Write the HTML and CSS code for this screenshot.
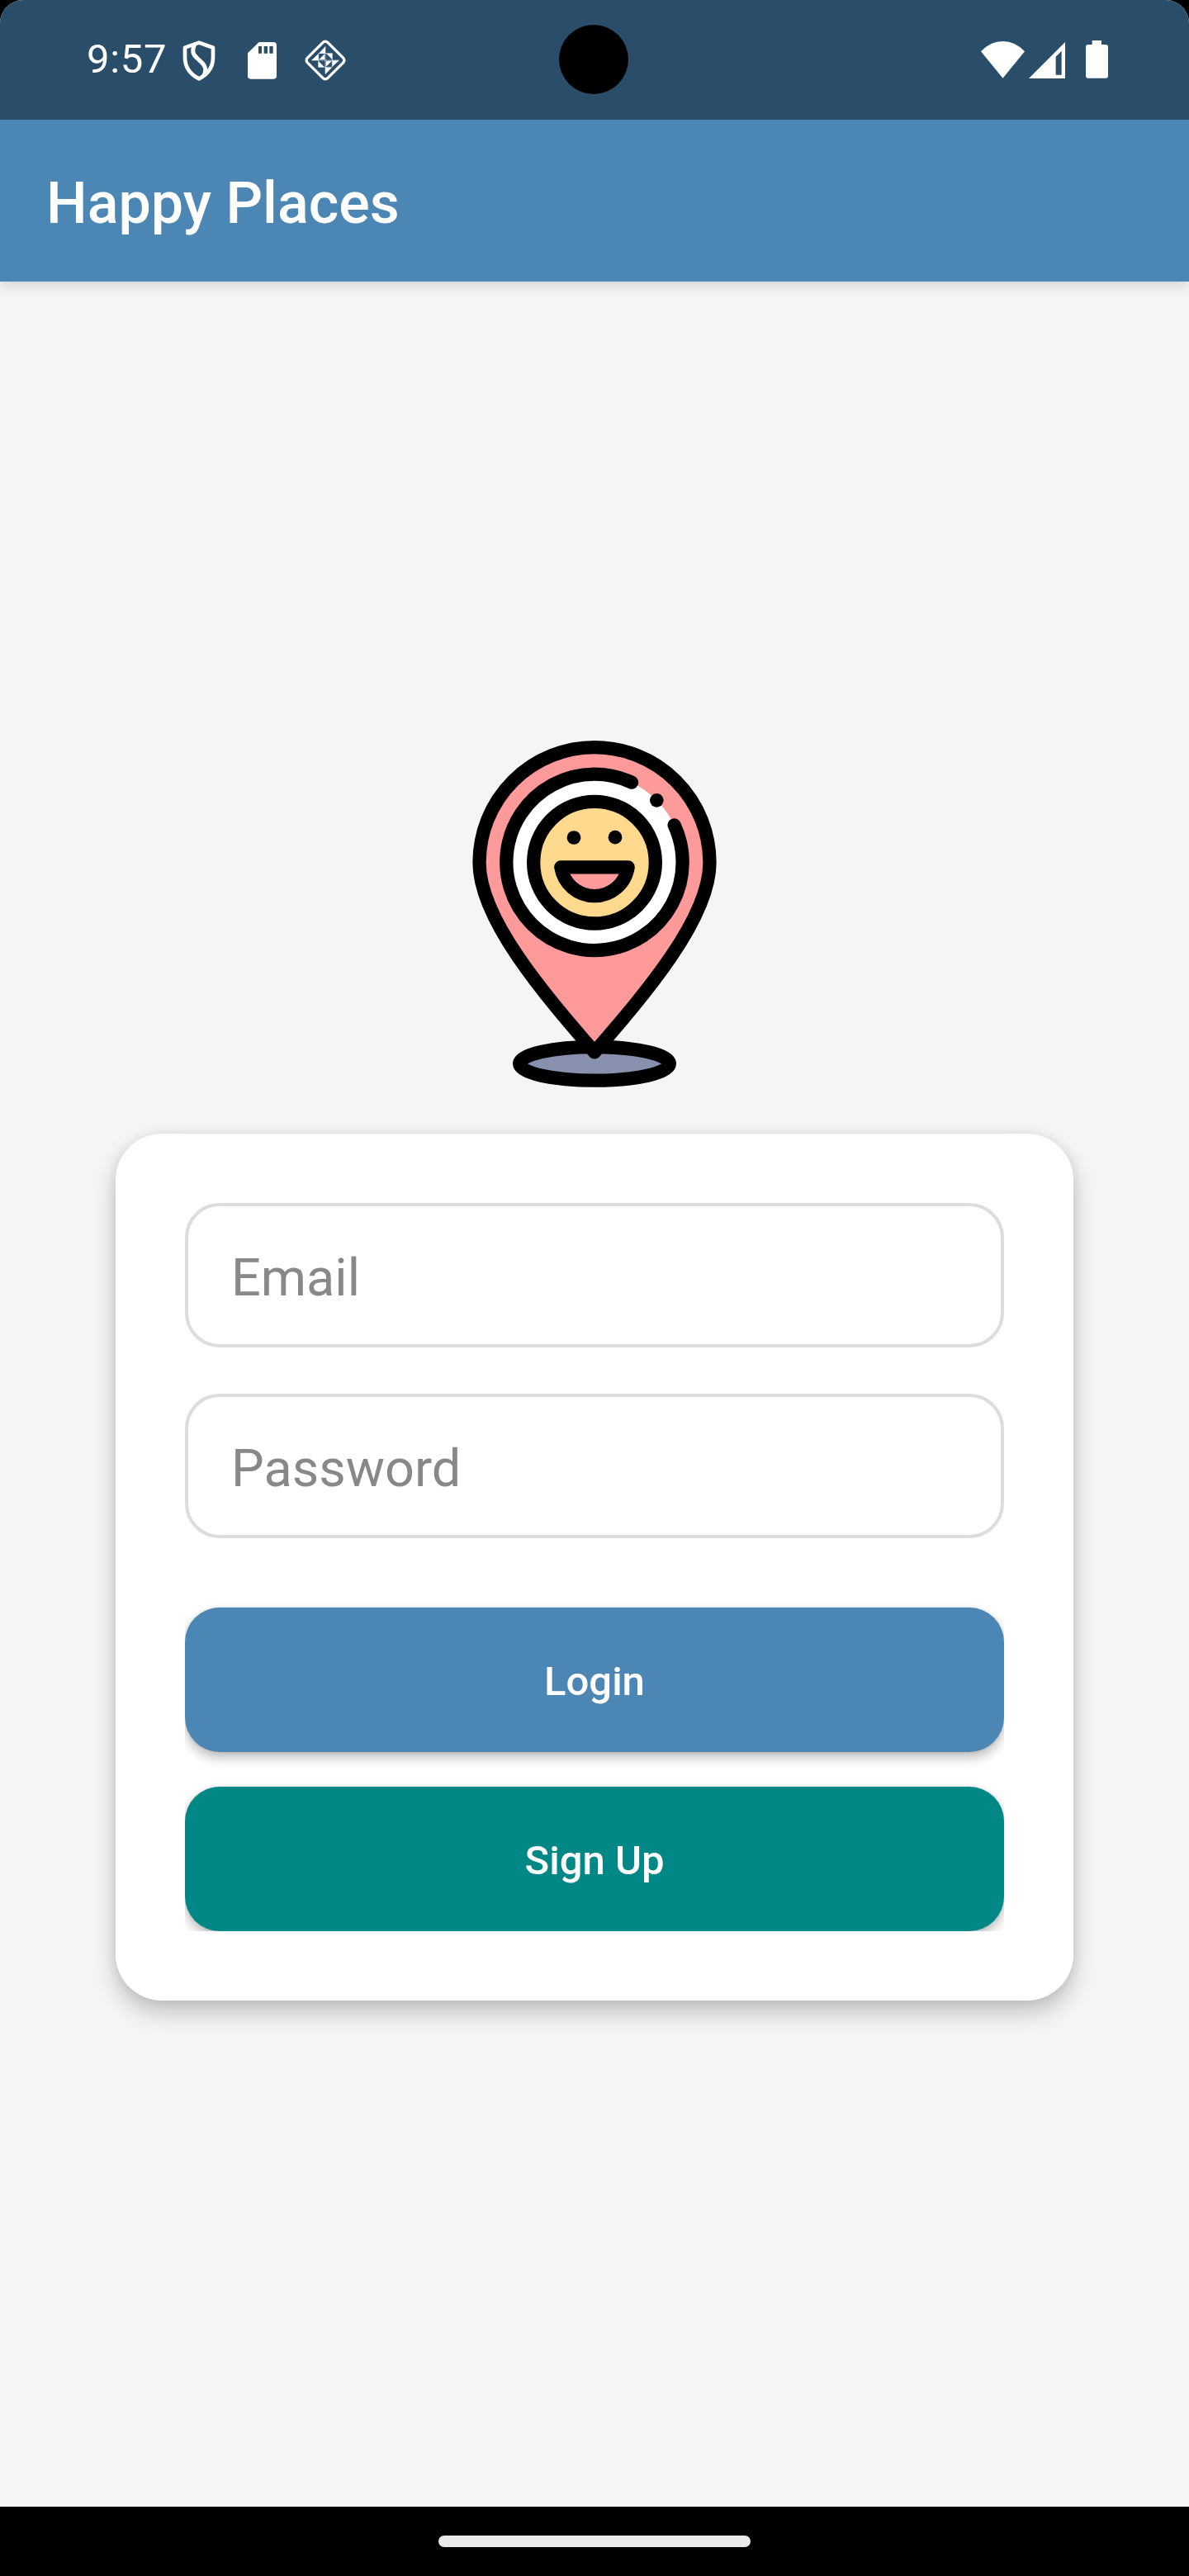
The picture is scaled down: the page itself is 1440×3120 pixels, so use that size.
FILE: index.html
```html
<!DOCTYPE html>
<html lang="en">
<head>
<meta charset="utf-8">
<title>Happy Places</title>
<link rel="stylesheet" href="styles.css">
</head>
<body>
<div class="screen">
  <div class="statusbar">
    <span class="clock">9:57</span>
    <svg class="icon icon-shield" width="42" height="50" viewBox="0 0 126 150" fill="none" stroke="#fff" stroke-width="14" stroke-linejoin="round">
      <path d="M63 8 L114 26 V62 C114 98 92 124 63 139 C34 124 12 98 12 62 V26 Z"/>
      <path d="M47 14 C37 38 40 50 55 63 L72 79 C88 94 91 107 80 128" stroke-width="15"/>
    </svg>
    <svg class="icon icon-sd" width="35" height="45" viewBox="0 0 105 135">
      <path fill="#fff" fill-rule="evenodd" d="M41 0 H93 Q105 0 105 12 V124 Q105 134 94 134 H11 Q0 134 0 124 V40 Z M39 15 V41 H51 V15 Z M59 15 V41 H72 V15 Z M79 15 V41 H92 V15 Z"/>
    </svg>
    <svg class="icon icon-quilt" width="50" height="50" viewBox="0 0 150 150">
      <rect x="23" y="23" width="104" height="104" rx="12" transform="rotate(45 75 75)" fill="none" stroke="#fff" stroke-width="10"/>
      <path fill="#fff" d="M75 25 V50 H51 Z M50 51 V75 H25 Z M100 76 H125 L100 99 Z M75 101 H99 L75 126 Z M73 52 V73 H51 Z M78 50 H100 V72 Z M50 78 V100 H72 Z M77 77 H99 L77 99 Z"/>
      <path fill="none" stroke="#fff" stroke-opacity=".55" stroke-width="3" d="M50 50 H100 V100 H50 Z M75 25 V125 M25 75 H125"/>
    </svg>
    <span class="camera"></span>
    <svg class="icon icon-wifi" width="53" height="45" viewBox="0 0 159 135">
      <path fill="#fff" d="M0 37 Q34 0 79.500 0 T159 37 L79.500 134 Z"/>
    </svg>
    <svg class="icon icon-signal" width="44" height="44" viewBox="0 0 132 132">
      <path fill="#fff" fill-rule="evenodd" d="M132 0 V132 H0 Z M119 32 L98 53 V119 H119 Z"/>
    </svg>
    <svg class="icon icon-battery" width="27" height="46" viewBox="0 0 81 138">
      <path fill="#fff" d="M23 0 H57 V15 H72 Q81 15 81 24 V128 Q81 137 72 137 H9 Q0 137 0 128 V24 Q0 15 9 15 H23 Z"/>
    </svg>
  </div>
  <header class="appbar"><h1 class="title">Happy Places</h1></header>
  <main class="content">
    <svg class="logo" width="420" height="420" viewBox="-150 51 1260 1260" fill="none" stroke="#000" stroke-width="49" stroke-linecap="round" stroke-linejoin="round">
      <ellipse cx="480" cy="1225" rx="272.500" ry="61" fill="#8791ae"/>
      <path fill="#ff9a9a" d="M480 1183 C300 975 61.500 700 61.500 494 A418.500 418.500 0 0 1 898.500 494 C898.500 700 660 975 480 1183 Z"/>
      <circle cx="480" cy="494" r="320" fill="#fff" stroke="none"/>
      <path d="M770 358 A320 320 0 1 1 615 203"/>
      <circle cx="480" cy="494" r="221.500" fill="#ffd98e"/>
      <path fill="#ff9a9a" d="M358 511 H602 A123.500 123.500 0 0 1 358 511 Z"/>
      <g fill="#000" stroke="none">
        <circle cx="706" cy="268" r="25"/>
        <circle cx="405" cy="403.500" r="25"/>
        <circle cx="555" cy="402.500" r="25"/>
      </g>
    </svg>
    <form class="card">
      <div class="fields">
        <input class="field" type="email" placeholder="Email">
        <input class="field" type="password" placeholder="Password">
        <button class="button button-login" type="button">Login</button>
        <button class="button button-signup" type="button">Sign Up</button>
      </div>
    </form>
  </main>
  <div class="navbar"><span class="handle"></span></div>
</div>
</body>
</html>
```
FILE: styles.css
```css
* {
  box-sizing: border-box;
}

body {
  margin: 0;
  background: #000;
  font-family: Roboto, sans-serif;
}

.screen {
  display: flex;
  flex-direction: column;
  width: 1440px;
  height: 3120px;
  overflow: hidden;
  border-radius: 28px 28px 0 0;
  background: #f5f5f5;
}

.statusbar {
  position: relative;
  flex: none;
  display: flex;
  align-items: flex-start;
  height: 145px;
  padding: 48px 98px 0 105px;
  background: #2a4e69;
  color: #fff;
}

.clock {
  width: 115px;
  font-size: 49px;
  line-height: 48px;
  letter-spacing: .7px;
}

.icon {
  flex: none;
  display: block;
}

.icon-shield { margin-top: 1px; }
.icon-sd { margin: 3px 0 0 38px; }
.icon-quilt { margin-left: 34px; }
.icon-wifi { margin: 2px 0 0 auto; }
.icon-signal { margin: 3px 0 0 5px; }
.icon-battery { margin: 1px 0 0 25px; }

.camera {
  position: absolute;
  top: 30px;
  left: 677px;
  width: 84px;
  height: 84px;
  border-radius: 50%;
  background: #000;
}

.appbar {
  flex: none;
  display: flex;
  align-items: center;
  height: 196px;
  padding: 6px 56px 0;
  background: #4c86b4;
  box-shadow: 0 5px 16px rgba(0, 0, 0, .14);
}

.title {
  margin: 0;
  color: #fff;
  font-size: 70px;
  font-weight: 500;
  line-height: 82px;
}

.content {
  flex: 1;
  display: flex;
  flex-direction: column;
  align-items: center;
  justify-content: center;
  gap: 56px;
  padding-bottom: 57px;
}

.logo {
  flex: none;
  display: block;
}

.card {
  width: 1160px;
  padding: 84px;
  border-radius: 56px;
  background: #fff;
  box-shadow: 0 14px 28px rgba(0, 0, 0, .22), 0 0 14px rgba(0, 0, 0, .07);
}

.fields {
  display: flex;
  flex-direction: column;
  overflow: hidden;
}

.field {
  width: 100%;
  height: 175px;
  margin: 0 0 56px;
  padding: 6px 52px 0;
  border: 4px solid #dcdcdc;
  border-radius: 42px;
  background: #fff;
  font-family: inherit;
  font-size: 63px;
}

.field::placeholder {
  color: #888;
  opacity: 1;
}

.button {
  height: 175px;
  padding: 4px 0 0;
  border: 0;
  border-radius: 42px;
  color: #fff;
  font-family: inherit;
  font-size: 49px;
  font-weight: 500;
  box-shadow: 0 7px 14px rgba(0, 0, 0, .26), 0 0 4px rgba(0, 0, 0, .1);
}

.button-login {
  margin: 28px 0 42px;
  background: #4c86b4;
}

.button-signup {
  background: #008786;
}

.navbar {
  flex: none;
  display: flex;
  align-items: center;
  justify-content: center;
  height: 84px;
  background: #000;
}

.handle {
  width: 378px;
  height: 14px;
  border-radius: 7px;
  background: #eaeaea;
}
```
